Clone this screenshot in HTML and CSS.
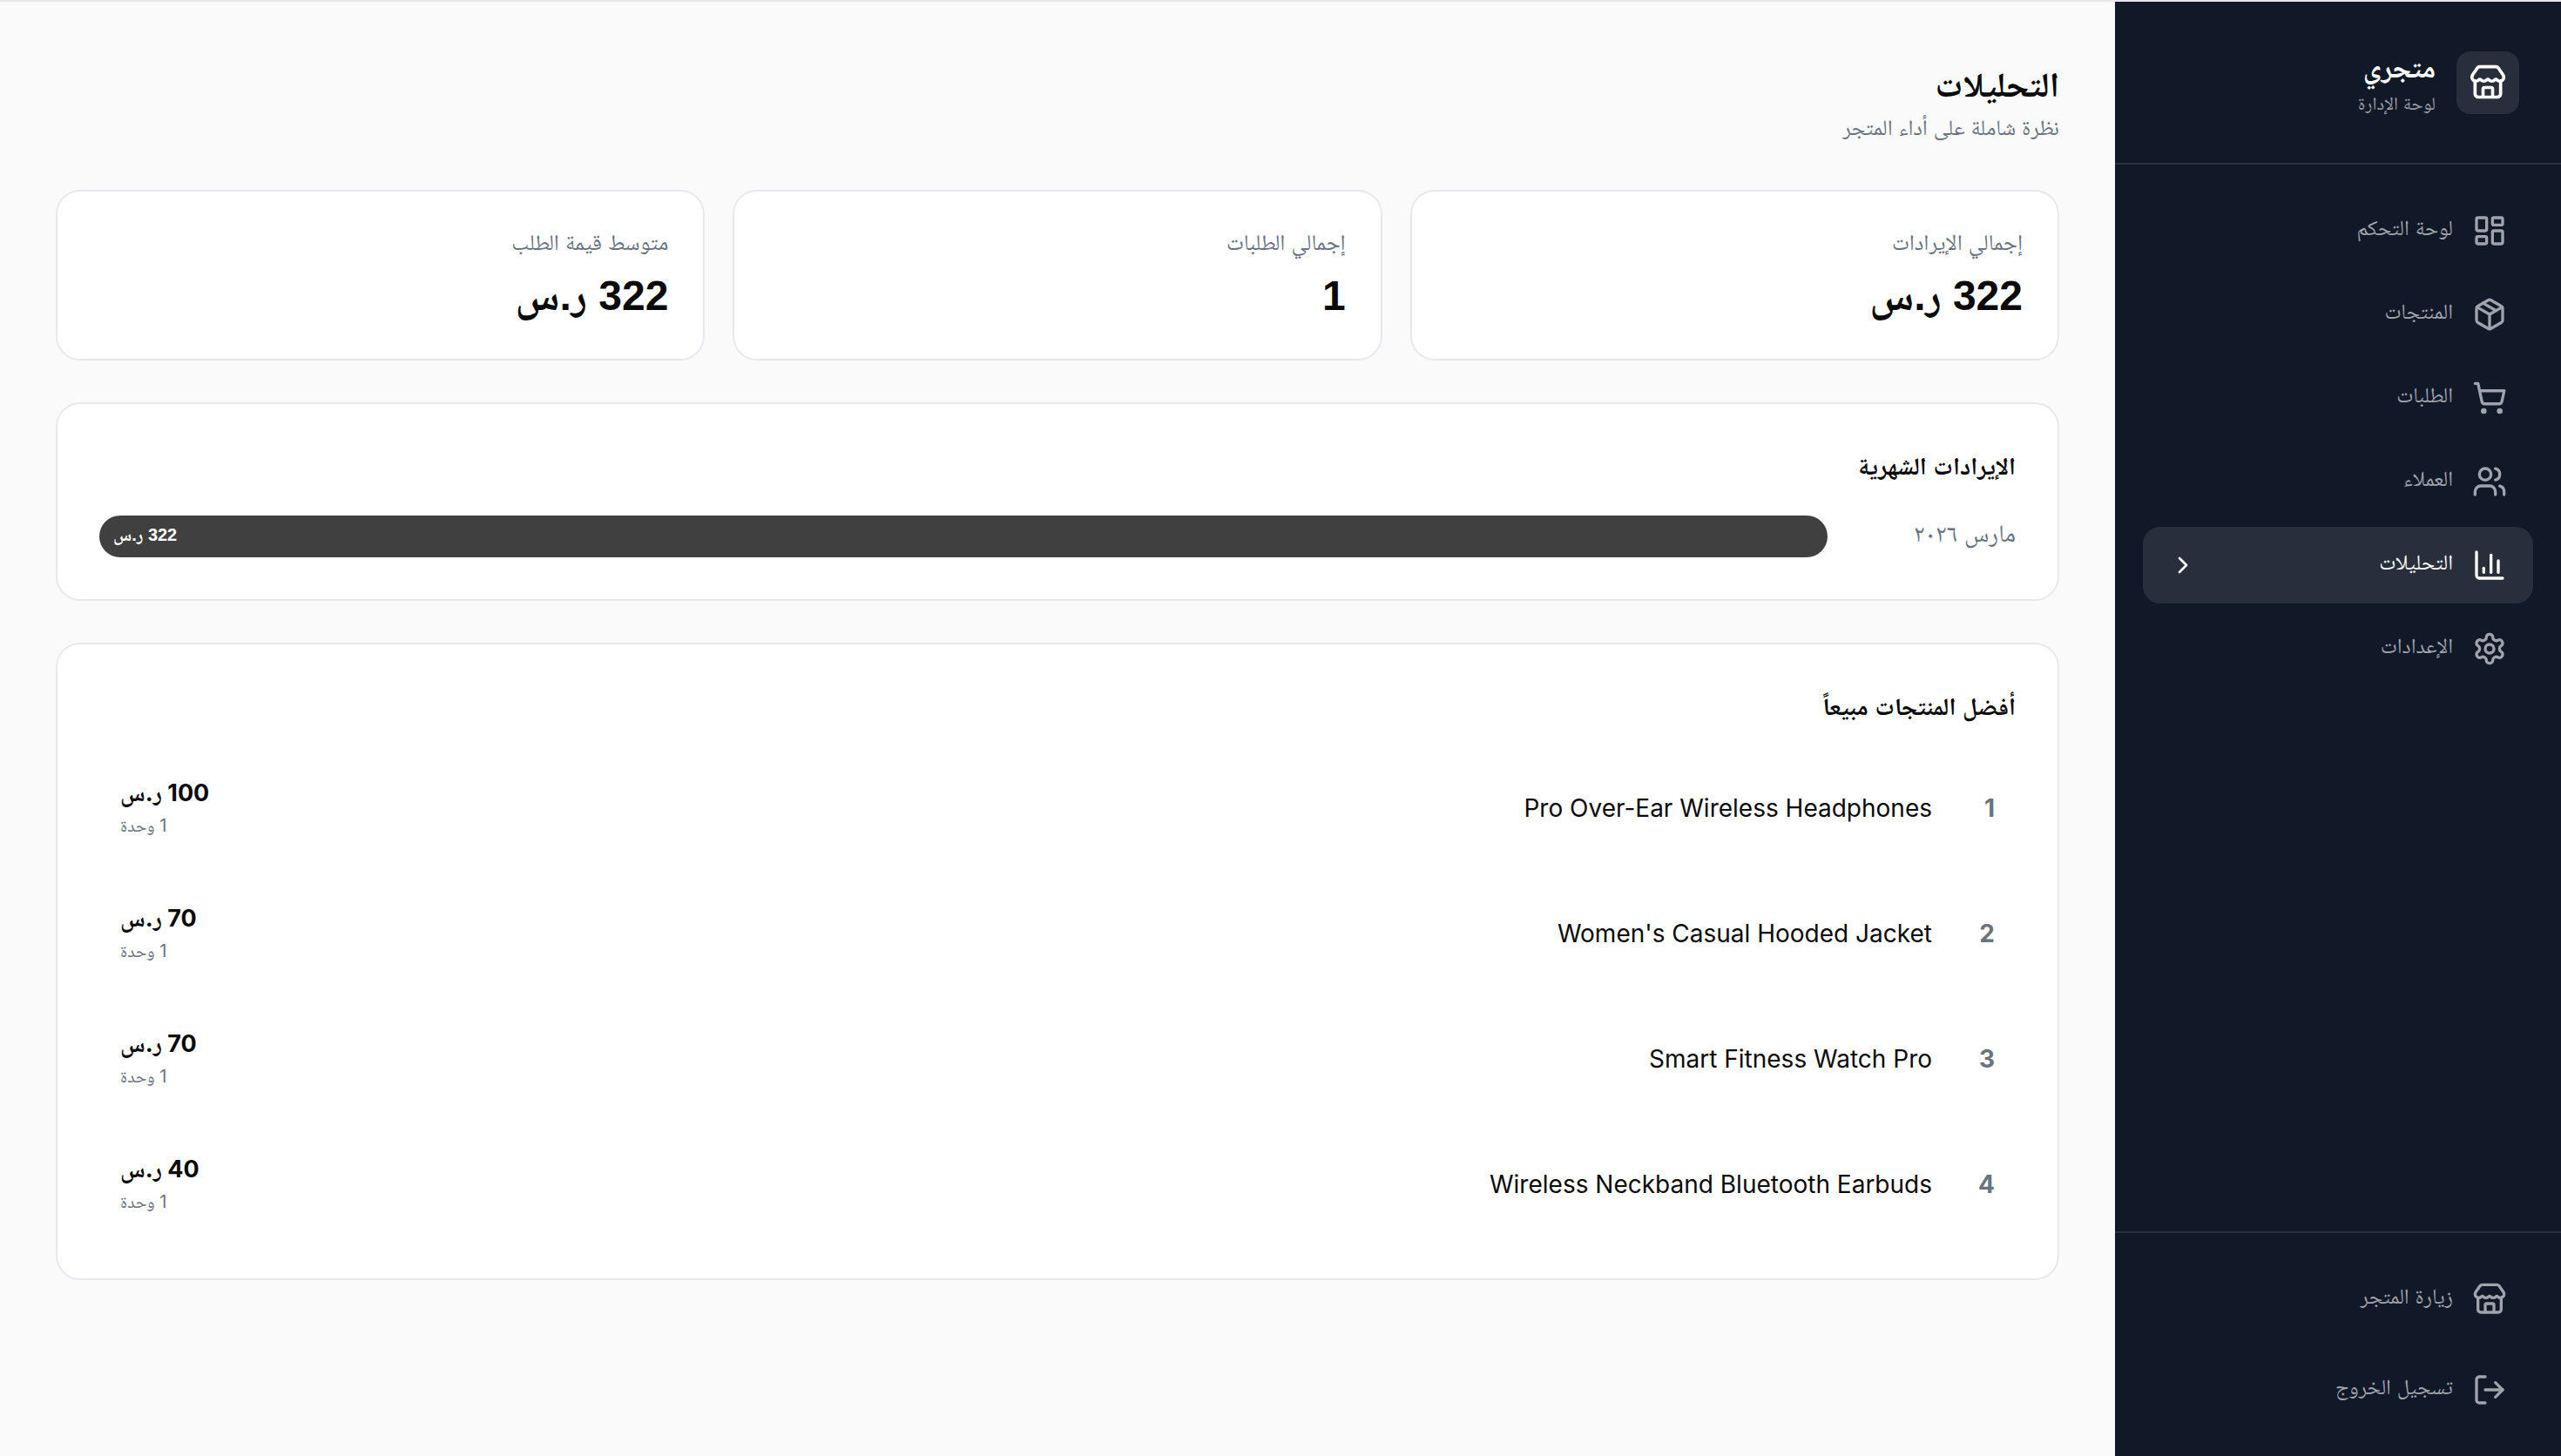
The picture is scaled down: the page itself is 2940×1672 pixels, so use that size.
FILE: index.html
```html
<!DOCTYPE html>
<html lang="ar" dir="rtl">
<head>
<meta charset="utf-8">
<title>التحليلات</title>
<link rel="stylesheet" href="styles.css">
</head>
<body>
<div class="app">
  <aside class="sidebar">
    <div class="brand">
      <div class="brand-mark">
        <svg class="ico ico-44" viewBox="0 0 24 24"><path d="M15 21v-5a1 1 0 0 0-1-1h-4a1 1 0 0 0-1 1v5"/><path d="M17.774 10.31a1.12 1.12 0 0 0-1.549 0 2.5 2.5 0 0 1-3.451 0 1.12 1.12 0 0 0-1.548 0 2.5 2.5 0 0 1-3.452 0 1.12 1.12 0 0 0-1.549 0 2.5 2.5 0 0 1-3.77-3.248l2.889-4.184A2 2 0 0 1 7 2h10a2 2 0 0 1 1.653.873l2.895 4.192a2.5 2.5 0 0 1-3.774 3.244"/><path d="M4 10.95V19a2 2 0 0 0 2 2h12a2 2 0 0 0 2-2v-8.05"/></svg>
      </div>
      <div class="brand-text">
        <div class="brand-name">متجري</div>
        <div class="brand-sub">لوحة الإدارة</div>
      </div>
    </div>
    <nav class="nav">
      <a class="nav-item"><svg class="ico" viewBox="0 0 24 24"><rect x="3" y="3" width="7" height="9" rx="1"/><rect x="14" y="3" width="7" height="5" rx="1"/><rect x="14" y="12" width="7" height="9" rx="1"/><rect x="3" y="16" width="7" height="5" rx="1"/></svg><span>لوحة التحكم</span></a>
      <a class="nav-item"><svg class="ico" viewBox="0 0 24 24"><path d="M11 21.73a2 2 0 0 0 2 0l7-4A2 2 0 0 0 21 16V8a2 2 0 0 0-1-1.73l-7-4a2 2 0 0 0-2 0l-7 4A2 2 0 0 0 3 8v8a2 2 0 0 0 1 1.73z"/><path d="M12 22V12"/><polyline points="3.29 7 12 12 20.71 7"/><path d="m7.5 4.27 9 5.15"/></svg><span>المنتجات</span></a>
      <a class="nav-item"><svg class="ico" viewBox="0 0 24 24"><circle cx="8" cy="21" r="1"/><circle cx="19" cy="21" r="1"/><path d="M2.05 2.05h2l2.66 12.42a2 2 0 0 0 2 1.58h9.78a2 2 0 0 0 1.95-1.57l1.65-7.43H5.12"/></svg><span>الطلبات</span></a>
      <a class="nav-item"><svg class="ico" viewBox="0 0 24 24"><path d="M16 21v-2a4 4 0 0 0-4-4H6a4 4 0 0 0-4 4v2"/><circle cx="9" cy="7" r="4"/><path d="M22 21v-2a4 4 0 0 0-3-3.87"/><path d="M16 3.13a4 4 0 0 1 0 7.75"/></svg><span>العملاء</span></a>
      <a class="nav-item is-active"><svg class="ico" viewBox="0 0 24 24"><path d="M3 3v16a2 2 0 0 0 2 2h16"/><path d="M18 17V9"/><path d="M13 17V5"/><path d="M8 17v-3"/></svg><span>التحليلات</span><svg class="ico ico-32 chev" viewBox="0 0 24 24"><path d="m9 18 6-6-6-6"/></svg></a>
      <a class="nav-item"><svg class="ico" viewBox="0 0 24 24"><path d="M12.22 2h-.44a2 2 0 0 0-2 2v.18a2 2 0 0 1-1 1.73l-.43.25a2 2 0 0 1-2 0l-.15-.08a2 2 0 0 0-2.73.73l-.22.38a2 2 0 0 0 .73 2.73l.15.1a2 2 0 0 1 1 1.72v.51a2 2 0 0 1-1 1.74l-.15.09a2 2 0 0 0-.73 2.73l.22.38a2 2 0 0 0 2.73.73l.15-.08a2 2 0 0 1 2 0l.43.25a2 2 0 0 1 1 1.73V20a2 2 0 0 0 2 2h.44a2 2 0 0 0 2-2v-.18a2 2 0 0 1 1-1.73l.43-.25a2 2 0 0 1 2 0l.15.08a2 2 0 0 0 2.73-.73l.22-.39a2 2 0 0 0-.73-2.73l-.15-.08a2 2 0 0 1-1-1.74v-.5a2 2 0 0 1 1-1.74l.15-.09a2 2 0 0 0 .73-2.73l-.22-.38a2 2 0 0 0-2.73-.73l-.15.08a2 2 0 0 1-2 0l-.43-.25a2 2 0 0 1-1-1.73V4a2 2 0 0 0-2-2z"/><circle cx="12" cy="12" r="3"/></svg><span>الإعدادات</span></a>
    </nav>
    <div class="side-foot">
      <a class="nav-item"><svg class="ico" viewBox="0 0 24 24"><path d="M15 21v-5a1 1 0 0 0-1-1h-4a1 1 0 0 0-1 1v5"/><path d="M17.774 10.31a1.12 1.12 0 0 0-1.549 0 2.5 2.5 0 0 1-3.451 0 1.12 1.12 0 0 0-1.548 0 2.5 2.5 0 0 1-3.452 0 1.12 1.12 0 0 0-1.549 0 2.5 2.5 0 0 1-3.77-3.248l2.889-4.184A2 2 0 0 1 7 2h10a2 2 0 0 1 1.653.873l2.895 4.192a2.5 2.5 0 0 1-3.774 3.244"/><path d="M4 10.95V19a2 2 0 0 0 2 2h12a2 2 0 0 0 2-2v-8.05"/></svg><span>زيارة المتجر</span></a>
      <a class="nav-item"><svg class="ico" viewBox="0 0 24 24"><path d="M9 21H5a2 2 0 0 1-2-2V5a2 2 0 0 1 2-2h4"/><polyline points="16 17 21 12 16 7"/><line x1="21" y1="12" x2="9" y2="12"/></svg><span>تسجيل الخروج</span></a>
    </div>
  </aside>
  <main class="main">
    <header class="page-head">
      <h1 class="page-title">التحليلات</h1>
      <p class="page-sub">نظرة شاملة على أداء المتجر</p>
    </header>
    <section class="stats">
      <div class="card stat"><div class="stat-label">إجمالي الإيرادات</div><div class="stat-value">322 ر.س</div></div>
      <div class="card stat"><div class="stat-label">إجمالي الطلبات</div><div class="stat-value">1</div></div>
      <div class="card stat"><div class="stat-label">متوسط قيمة الطلب</div><div class="stat-value">322 ر.س</div></div>
    </section>
    <section class="card panel">
      <h2 class="panel-title">الإيرادات الشهرية</h2>
      <div class="month-row">
        <div class="month-label">مارس ٢٠٢٦</div>
        <div class="month-bar"><span class="month-amount">322 ر.س</span></div>
      </div>
    </section>
    <section class="card panel">
      <h2 class="panel-title">أفضل المنتجات مبيعاً</h2>
      <div class="rows">
        <div class="row"><div class="rank">1</div><div class="prod">Pro Over-Ear Wireless Headphones</div><div class="sales"><div class="amount">100 ر.س</div><div class="units">1 وحدة</div></div></div>
        <div class="row"><div class="rank">2</div><div class="prod">Women's Casual Hooded Jacket</div><div class="sales"><div class="amount">70 ر.س</div><div class="units">1 وحدة</div></div></div>
        <div class="row"><div class="rank">3</div><div class="prod">Smart Fitness Watch Pro</div><div class="sales"><div class="amount">70 ر.س</div><div class="units">1 وحدة</div></div></div>
        <div class="row"><div class="rank">4</div><div class="prod">Wireless Neckband Bluetooth Earbuds</div><div class="sales"><div class="amount">40 ر.س</div><div class="units">1 وحدة</div></div></div>
      </div>
    </section>
  </main>
</div>
</body>
</html>
```
FILE: styles.css
```css
* { box-sizing: border-box; }
html, body { margin: 0; height: 100%; }
body {
  font-family: "Liberation Sans", "Noto Naskh Arabic", sans-serif;
  background: #fafafa;
  color: #0a0a0a;
  overflow: hidden;
}
.app {
  display: flex;
  height: 1672px;
  border-top: 2px solid #e8e6ee;
}
.sidebar {
  flex: 0 0 512px;
  display: flex;
  flex-direction: column;
  background: #111827;
  color: #9fa3ab;
}
.brand {
  display: flex;
  align-items: center;
  gap: 24px;
  height: 187px;
  padding: 0 48px;
  border-bottom: 2px solid #293040;
  flex: 0 0 auto;
}
.brand-mark {
  width: 72px;
  height: 72px;
  border-radius: 16px;
  background: #282e3c;
  color: #fff;
  display: flex;
  align-items: center;
  justify-content: center;
}
.brand-name { font-size: 33px; line-height: 46px; font-weight: 700; color: #fff; }
.brand-sub { font-size: 21px; line-height: 32px; color: #9a9ea6; margin-top: 2px; }
.ico {
  width: 40px;
  height: 40px;
  flex: 0 0 auto;
  fill: none;
  stroke: currentColor;
  stroke-width: 2;
  stroke-linecap: round;
  stroke-linejoin: round;
}
.ico-44 { width: 44px; height: 44px; }
.ico-32 { width: 32px; height: 32px; }
.nav {
  flex: 1;
  display: flex;
  flex-direction: column;
  gap: 8px;
  padding: 32px;
}
.nav-item {
  display: flex;
  align-items: center;
  gap: 22px;
  height: 88px;
  padding: 0 30px;
  border-radius: 20px;
  font-size: 24.5px;
}
.nav-item.is-active { background: #282e3c; color: #fff; }
.chev { margin-inline-start: auto; }
.side-foot {
  display: flex;
  flex-direction: column;
  gap: 16px;
  padding: 32px;
  border-top: 2px solid #293040;
}
.main {
  flex: 1;
  min-width: 0;
  padding: 64px;
  display: flex;
  flex-direction: column;
  gap: 48px;
}
.page-title { margin: 0; font-size: 40px; line-height: 62px; font-weight: 700; }
.page-sub { margin: 0 0 6px; font-size: 25px; line-height: 36px; color: #6b7280; }
.stats {
  display: grid;
  grid-template-columns: repeat(3, 1fr);
  gap: 32px;
}
.card {
  background: #fff;
  border: 2px solid #e8e8ee;
  border-radius: 28px;
}
.stat { padding: 40px; }
.stat-label { font-size: 25.5px; line-height: 36px; color: #6b7280; margin-bottom: 12px; }
.stat-value { font-size: 48px; line-height: 64px; font-weight: 700; }
.panel { padding: 48px; }
.panel-title { margin: 0 0 32px; font-size: 28px; line-height: 48px; font-weight: 700; }
.month-row { display: flex; align-items: center; gap: 48px; }
.month-label { flex: 0 0 168px; font-size: 28px; color: #6b7280; }
.month-bar {
  flex: 1;
  height: 48px;
  border-radius: 24px;
  background: #404040;
  color: #fff;
  display: flex;
  align-items: center;
  justify-content: flex-end;
  padding: 2px 16px 0;
}
.month-amount { font-size: 20px; font-weight: 700; }
.rows { display: flex; flex-direction: column; gap: 24px; }
.row {
  display: flex;
  align-items: center;
  height: 120px;
  padding: 0 24px;
  gap: 24px;
}
.rank {
  flex: 0 0 48px;
  font-family: Inter, "Noto Naskh Arabic", sans-serif;
  font-size: 28px;
  font-weight: 700;
  color: #6b7280;
}
.prod { flex: 1; font-family: Inter, "Noto Naskh Arabic", sans-serif; font-size: 28px; font-weight: 400; }
.sales { text-align: left; }
.amount { font-family: Inter, "Noto Naskh Arabic", sans-serif; font-size: 27px; line-height: 38px; font-weight: 700; margin-bottom: 2px; }
.units { font-family: Inter, "Noto Naskh Arabic", sans-serif; font-size: 20px; line-height: 32px; color: #6b7280; }
```
